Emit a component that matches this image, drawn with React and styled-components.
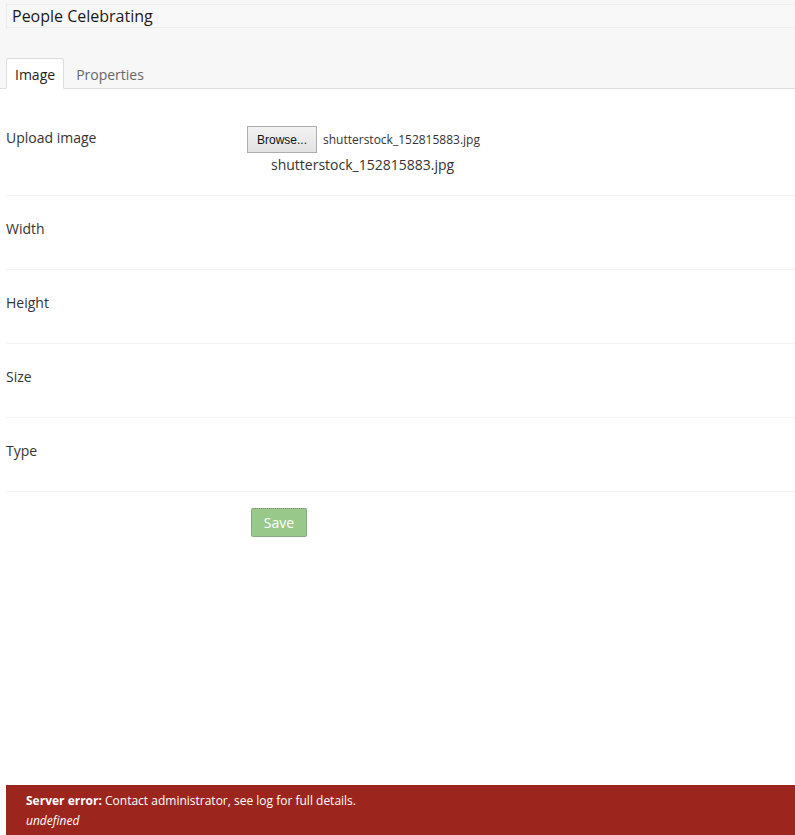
import React from "react";
import styled, { createGlobalStyle } from "styled-components";

const GlobalStyle = createGlobalStyle`
  html, body {
    margin: 0;
    padding: 0;
    background: #fff;
    overflow: hidden;
  }
  body {
    font-family: "Open Sans", "Noto Sans", sans-serif;
    color: #333;
  }
`;

const Page = styled.div`
  width: 820px;
  height: 835px;
  position: relative;
`;

const Header = styled.div`
  background: #f7f7f7;
  padding: 4px 0 0 6px;
  border-bottom: 1px solid #ddd;
  height: 84px;
  display: flex;
  flex-direction: column;
  justify-content: space-between;
`;

const TitleInput = styled.div`
  height: 22px;
  border: 1px solid #ebebeb;
  border-right: none;
  background: #f8f8f8;
  padding-left: 5px;
  font-size: 16px;
  line-height: 22px;
  color: #1a1a1a;
`;

const Tabs = styled.div`
  display: flex;
  align-items: flex-end;
  margin-bottom: -1px;
`;

const Tab = styled.div`
  height: 30px;
  padding: 1px 8px 0;
  box-sizing: border-box;
  font-size: 14px;
  line-height: 30px;
  color: ${(p) => (p.$active ? "#222" : "#666")};
  background: ${(p) => (p.$active ? "#fff" : "transparent")};
  border: 1px solid ${(p) => (p.$active ? "#ddd" : "transparent")};
  border-bottom-color: ${(p) => (p.$active ? "#fff" : "transparent")};
  border-radius: 3px 3px 0 0;
  margin-right: 3px;
  height: 31px;
`;

const Form = styled.div`
  padding: 16px 0 0 6px;
`;

const Row = styled.div`
  display: flex;
  align-items: flex-start;
  box-sizing: border-box;
  min-height: 74px;
  padding: 23px 0 20px;
  border-bottom: 1px solid #f2f2f2;
`;

const Label = styled.div`
  width: 241px;
  flex-shrink: 0;
  font-size: 14px;
  line-height: 20px;
  color: #333;
`;

const Field = styled.div`
  display: flex;
  flex-direction: column;
  gap: 2px;
  margin-top: -2px;
`;

const FileLine = styled.div`
  display: flex;
  align-items: center;
  gap: 6px;
`;

const BrowseButton = styled.button`
  height: 27px;
  width: 70px;
  padding: 0;
  font-family: "Liberation Sans", Arial, sans-serif;
  font-size: 12px;
  color: #111;
  background: linear-gradient(#f2f2f2, #e3e3e3);
  border: 1px solid #adadad;
  border-radius: 0;
`;

const FileName = styled.span`
  font-size: ${(p) => (p.$big ? "14px" : "12px")};
  line-height: 20px;
  color: #333;
  margin-left: ${(p) => (p.$big ? "24px" : "0")};
`;

const Actions = styled.div`
  padding: 16px 0 0 245px;
`;

const SaveButton = styled.button`
  width: 56px;
  height: 29px;
  padding: 0;
  background: #98c98b;
  color: #fff;
  font-family: "Open Sans", sans-serif;
  font-size: 14px;
  border: 1px dotted #7a8a76;
  border-radius: 2px;
`;

const ErrorBar = styled.div`
  position: absolute;
  left: 6px;
  right: 0;
  bottom: 0;
  height: 50px;
  box-sizing: border-box;
  padding: 6px 0 0 20px;
  background: #9c261e;
  color: #fff;
  font-size: 12px;
  line-height: 20px;
  b {
    font-weight: 700;
  }
  i {
    display: block;
    font-style: italic;
  }
`;

const rows = ["Width", "Height", "Size", "Type"];

export default function App() {
  return (
    <Page>
      <GlobalStyle />
      <Header>
        <TitleInput>People Celebrating</TitleInput>
        <Tabs>
          <Tab $active>Image</Tab>
          <Tab>Properties</Tab>
        </Tabs>
      </Header>
      <Form>
        <Row>
          <Label>Upload image</Label>
          <Field>
            <FileLine>
              <BrowseButton>Browse...</BrowseButton>
              <FileName>shutterstock_152815883.jpg</FileName>
            </FileLine>
            <FileName $big>shutterstock_152815883.jpg</FileName>
          </Field>
        </Row>
        {rows.map((r) => (
          <Row key={r}>
            <Label>{r}</Label>
          </Row>
        ))}
        <Actions>
          <SaveButton>Save</SaveButton>
        </Actions>
      </Form>
      <ErrorBar>
        <b>Server error:</b> Contact administrator, see log for full details.
        <i>undefined</i>
      </ErrorBar>
    </Page>
  );
}
